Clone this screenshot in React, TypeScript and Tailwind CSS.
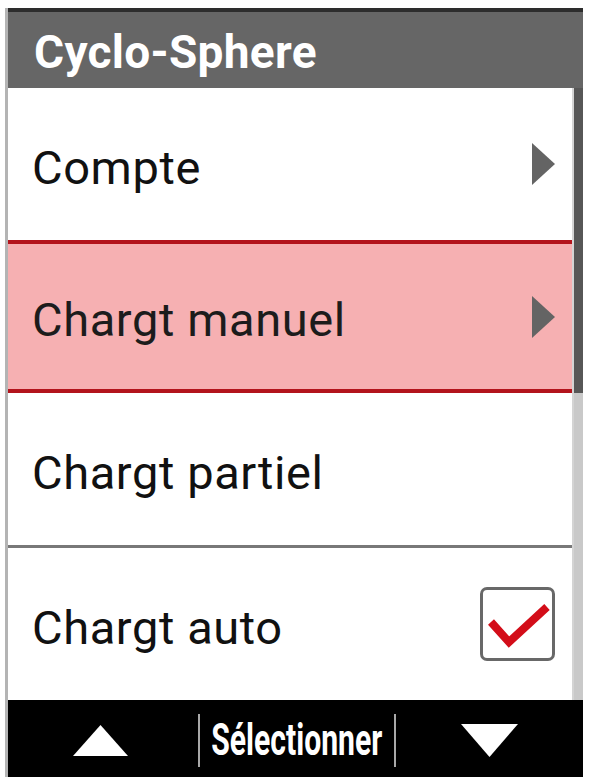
import React from 'react';

const font = { fontFamily: 'Roboto, "Liberation Sans", sans-serif' };

const Arrow: React.FC = () => (
  <svg width="23" height="42" viewBox="0 0 23 42" className="shrink-0">
    <polygon points="0,0 23,21 0,42" fill="#646464" />
  </svg>
);

const CheckBox: React.FC = () => (
  <div className="w-[75px] h-[74px] shrink-0 rounded-[7px] border-[3px] border-[#686868] bg-white flex items-center justify-center">
    <svg width="69" height="68" viewBox="0 0 69 68">
      <polyline
        points="8,32 26,52 64,17"
        fill="none"
        stroke="#d30d19"
        strokeWidth="8"
        strokeLinejoin="miter"
      />
    </svg>
  </div>
);

const App: React.FC = () => {
  return (
    <div className="w-[590px] h-[781px] bg-white pt-[8px] pl-[5px]" style={font}>
      <div className="w-[578px] flex flex-col border-l-[3px] border-[#b4b4b4]">
        {/* header */}
        <div className="h-[80px] border-t-4 border-[#2d2d2d] bg-[#666666] flex items-center pl-[26px]">
          <span className="text-white font-bold text-[46px] leading-none tracking-[0.3px] pt-[3px]">
            Cyclo-Sphere
          </span>
        </div>

        {/* list + scrollbar */}
        <div className="flex h-[612px]">
          <div className="w-[564px] flex flex-col">
            <div className="h-[152px] bg-white flex items-center justify-between pl-[24px] pr-[17px]">
              <span className="text-[47px] text-[#111] leading-none tracking-[0.6px] pt-[6px]">Compte</span>
              <Arrow />
            </div>
            <div className="h-[153px] bg-[#f6b0b2] border-y-4 border-[#b3141c] flex items-center justify-between pl-[24px] pr-[17px]">
              <span className="text-[47px] text-[#1c1c1c] leading-none tracking-[0.6px] pt-[6px]">Chargt manuel</span>
              <Arrow />
            </div>
            <div className="h-[155px] bg-white border-b-[3px] border-[#787878] flex items-center pl-[24px] pr-[17px]">
              <span className="text-[47px] text-[#111] leading-none tracking-[0.6px] pt-[6px]">Chargt partiel</span>
            </div>
            <div className="h-[152px] bg-white flex items-center justify-between pl-[24px] pr-[17px]">
              <span className="text-[47px] text-[#111] leading-none tracking-[0.6px] pt-[6px]">Chargt auto</span>
              <CheckBox />
            </div>
          </div>
          <div className="w-[11px] flex flex-col border-l-2 border-[#d4d4d4]">
            <div className="h-[305px] bg-[#575757]" />
            <div className="flex-1 bg-[#c9c9c9]" />
          </div>
        </div>

        {/* bottom bar */}
        <div className="h-[77px] bg-black flex items-center">
          <div className="w-[190px] flex justify-center pr-[6px] pt-[4px]">
            <svg width="55" height="31" viewBox="0 0 55 31">
              <polygon points="27.5,0 55,31 0,31" fill="#ffffff" />
            </svg>
          </div>
          <div className="w-[2px] h-[53px] bg-[#a8a8a8] mt-[4px]" />
          <div className="w-[194px] flex justify-center pt-[2px]">
            <span className="text-white font-bold text-[45px] leading-none inline-block scale-x-[0.67] whitespace-nowrap">
              Sélectionner
            </span>
          </div>
          <div className="w-[2px] h-[53px] bg-[#a8a8a8] mt-[4px]" />
          <div className="flex-1 flex justify-center pt-[4px]">
            <svg width="57" height="33" viewBox="0 0 57 33">
              <polygon points="0,0 57,0 28.5,33" fill="#ffffff" />
            </svg>
          </div>
        </div>
      </div>
    </div>
  );
};

export default App;
